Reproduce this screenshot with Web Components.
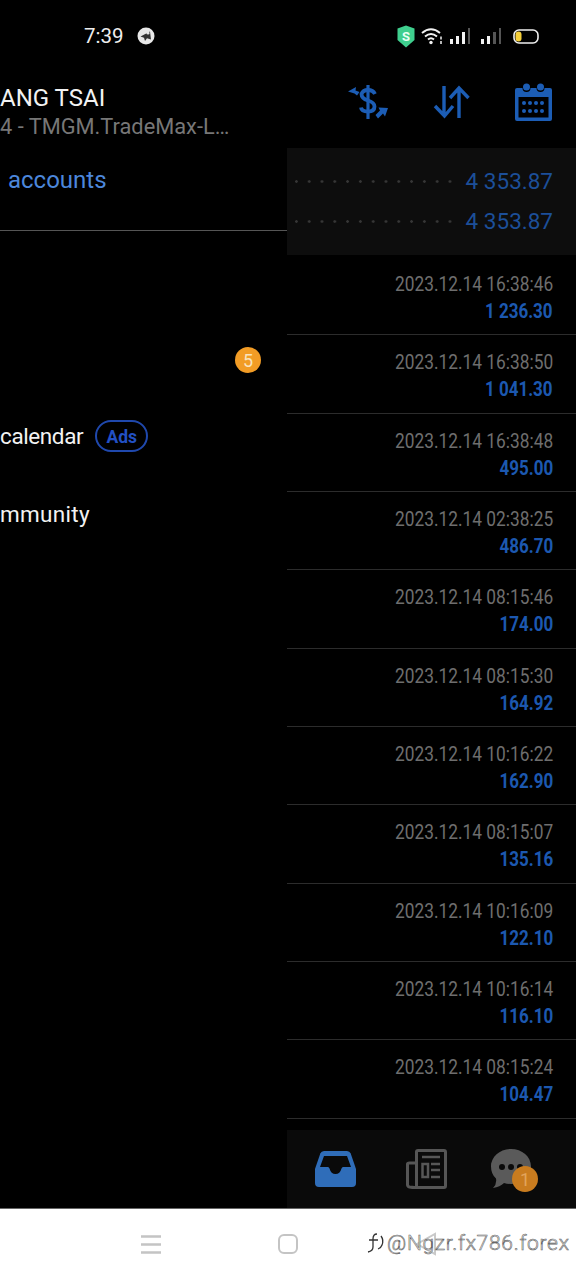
<!DOCTYPE html>
<html lang="en"><head><meta charset="utf-8"><title>Trade history</title>
<style>html,body{margin:0;background:#000;height:1280px;overflow:hidden;font-family:Roboto,sans-serif}</style>
</head><body>
<phone-screen>
  <status-bar slot="status"></status-bar>
  <side-drawer slot="drawer">
    <drawer-item slot="items"></drawer-item>
    <drawer-item slot="items"><order-badge slot="end">5</order-badge></drawer-item>
    <drawer-item slot="items"><span style="letter-spacing:-.4px">calendar</span><ads-pill>Ads</ads-pill></drawer-item>
    <drawer-item slot="items"><span style="letter-spacing:.3px">mmunity</span></drawer-item>
  </side-drawer>
  <trade-panel slot="panel">
    <balance-row value="4 353.87"></balance-row>
    <balance-row value="4 353.87"></balance-row>
    <trade-row slot="rows" d="2023.12.14 16:38:46" v="1 236.30"></trade-row>
    <trade-row slot="rows" d="2023.12.14 16:38:50" v="1 041.30"></trade-row>
    <trade-row slot="rows" d="2023.12.14 16:38:48" v="495.00"></trade-row>
    <trade-row slot="rows" d="2023.12.14 02:38:25" v="486.70"></trade-row>
    <trade-row slot="rows" d="2023.12.14 08:15:46" v="174.00"></trade-row>
    <trade-row slot="rows" d="2023.12.14 08:15:30" v="164.92"></trade-row>
    <trade-row slot="rows" d="2023.12.14 10:16:22" v="162.90"></trade-row>
    <trade-row slot="rows" d="2023.12.14 08:15:07" v="135.16"></trade-row>
    <trade-row slot="rows" d="2023.12.14 10:16:09" v="122.10"></trade-row>
    <trade-row slot="rows" d="2023.12.14 10:16:14" v="116.10"></trade-row>
    <trade-row slot="rows" d="2023.12.14 08:15:24" v="104.47"></trade-row>
  </trade-panel>
  <system-nav slot="nav"></system-nav>
</phone-screen>
<script>
function el(name, html, setup){
  customElements.define(name, class extends HTMLElement{
    constructor(){super();this.attachShadow({mode:'open'}).innerHTML=html;}
    connectedCallback(){ if(setup) setup(this); }
  });
}
el('phone-screen',`<style>
:host{display:grid;grid-template-columns:287px 289px;grid-template-rows:72px 1136px 72px;width:576px;height:1280px;background:#000;overflow:hidden}
.s{grid-column:1/3;display:block}.n{grid-column:1/3;display:block}
</style><slot class="s" name="status"></slot><slot name="drawer"></slot><slot name="panel"></slot><slot class="n" name="nav"></slot>`);

el('status-bar',`<style>
:host{display:flex;align-items:center;height:72px;box-sizing:border-box;padding:0 37px 0 84px;color:#eee;font:400 20.500px Roboto,sans-serif}
.t{width:53px}.sp{flex:1}svg{display:block;flex:none}
.r{display:flex;align-items:center;gap:6px}
</style>
<span class="t">7:39</span>
<svg width="18" height="18" viewBox="0 0 18 18"><circle cx="9" cy="9" r="8.5" fill="#e8e8e8"/><path d="M3.5 9.5 13 4.5l1 8-4-1.2-2 2.6-1-3.2z" fill="#333"/><circle cx="11" cy="6" r="1.6" fill="#e8e8e8"/></svg>
<span class="sp"></span>
<span class="r">
<svg width="18" height="23" viewBox="0 0 18 23"><path d="M9 .5 17.500 3.500V15L9 22.500.5 15V3.500z" fill="#3fcf8e"/><text x="9" y="16" text-anchor="middle" font-family="Roboto" font-weight="700" font-size="13" fill="#e9fff4">S</text></svg>
<svg width="23" height="18" viewBox="0 0 23 18" fill="none" stroke="#f2f2f2" stroke-width="2"><path d="M1 6q9-7.500 18 0M4 9.500q6-5 12 0M7 12.500q3-2.500 6 0"/><circle cx="10" cy="15.500" r="1.700" fill="#f2f2f2" stroke="none"/><path d="M20 9.500v3M20 14v3" stroke-width="1.500"/></svg>
<svg width="21" height="17" viewBox="0 0 21 17"><path d="M0 11h3v5H0zM6 8h3v8H6zM12 4h3v12h-3z" fill="#f2f2f2"/><path fill="#555" d="M18 0h2v16h-2z"/></svg>
<svg width="22" height="17" viewBox="0 0 22 17" style="margin-left:3px"><path d="M1 11h3v5H1zM7 8h3v8H7z" fill="#f2f2f2"/><path d="M13 4h3v12h-3zM19 0h2v16h-2z" fill="#555"/></svg>
<svg width="26" height="15" viewBox="0 0 26 15" style="margin-left:5px"><rect x="1" y="1" width="24" height="13" rx="5" fill="none" stroke="#f0f0f0" stroke-width="1.600"/><rect x="2.500" y="2.500" width="6" height="10" rx="3" fill="#f5cf3a"/></svg>
</span>`);

el('side-drawer',`<style>
:host{display:block;overflow:hidden;color:#f2f2f2;height:1136px}
.head{height:159px;box-sizing:border-box;border-bottom:1.500px solid #555;white-space:nowrap;padding-top:12px}
.name{font-size:24px;line-height:28px}
.srv{font-size:21.800px;line-height:26px;color:#777;margin-top:2px}
.acc{font-size:24px;line-height:28px;color:#4c87db;margin:26px 0 0 8px}
.items{display:flex;flex-direction:column;margin-top:10px}
</style>
<div class="head"><div class="name">ANG TSAI</div><div class="srv">4 - TMGM.TradeMax-L…</div><div class="acc">accounts</div></div>
<div class="items"><slot name="items"></slot></div>`);

el('drawer-item',`<style>
:host{display:flex;align-items:center;gap:13px;height:78px;font-size:22.500px;color:#f2f2f2;padding-right:26px;box-sizing:border-box}
.e{margin-left:auto;padding-top:4px}
</style><slot></slot><span class="e"><slot name="end"></slot></span>`);

el('order-badge',`<style>
:host{display:flex;align-items:center;justify-content:center;width:26px;height:26px;border-radius:50%;background:#f29c25;color:#f8e3bf;font-size:18px}
</style><slot></slot>`);

el('ads-pill',`<style>
:host{display:inline-flex;align-items:center;justify-content:center;width:53px;height:32px;box-sizing:border-box;border:2px solid #1f48ad;border-radius:16px;color:#2250c4;font-weight:700;font-size:17.500px;margin-left:-1px;padding-top:1px}
</style><slot></slot>`);

el('trade-panel',`<style>
:host{display:flex;flex-direction:column;height:1136px;overflow:hidden}
.bar{height:76px;flex:none;display:flex;align-items:center;justify-content:flex-end;gap:45px;padding:0 24px 16px 0;box-sizing:border-box;color:#1c5db5}
.bal{height:107px;flex:none;background:#0d0d0d;box-sizing:border-box;padding-top:13px}
.rows{flex:1;display:flex;flex-direction:column;padding-top:2px}
.tabs{height:78px;flex:none;background:#0a0a0a;display:flex;align-items:center;padding-left:28px;box-sizing:border-box}
svg{display:block;flex:none}
.ic{position:relative;flex:none}
.b{position:absolute;left:21px;top:17px;width:26px;height:26px;border-radius:50%;background:#c97c1f;color:#e2a45c;font-size:18px;display:flex;align-items:center;justify-content:center}
</style>
<div class="bar">
<svg width="40" height="36" viewBox="0 0 40 36" fill="none" stroke="currentColor"><path d="M27 10Q25 6 20 6t-6.500 4q0 4.500 6.500 6.500t6.500 6q0 5-6.500 5t-7-4" stroke-width="3.800"/><path d="M20 1v34" stroke-width="3.200"/><path d="M0 7.500 8 3 7.500 6.500l4 1.500-2.500 3.500-2.500-2z" fill="currentColor" stroke="none"/><path d="M40 24l-9.500-.5 1.500 3-4.500 4.500 2.500 3.500 5-5 2 3z" fill="currentColor" stroke="none"/></svg>
<svg width="37" height="34" viewBox="0 0 37 34" fill="none" stroke="currentColor" stroke-width="3.400"><path d="M11 1v30M2 21l9.500 10L20 21"/><path d="M26 33V3M17 13 26 3l9.500 10"/></svg>
<svg width="37" height="38" viewBox="0 0 37 38"><path fill="currentColor" d="M2 5h5.500a4 4 0 0 0 8 0h6a4 4 0 0 0 8 0H35a2 2 0 0 1 2 2v29a2 2 0 0 1-2 2H2a2 2 0 0 1-2-2V7a2 2 0 0 1 2-2z"/><circle cx="11.500" cy="4" r="3.500" fill="currentColor"/><circle cx="25.500" cy="4" r="3.500" fill="currentColor"/><rect x="3.500" y="14" width="30" height="20.500" fill="#000"/><g fill="currentColor"><circle cx="9" cy="20" r="2"/><circle cx="15" cy="20" r="2"/><circle cx="21" cy="20" r="2"/><circle cx="27" cy="20" r="2"/><circle cx="9" cy="28" r="2"/><circle cx="15" cy="28" r="2"/><circle cx="21" cy="28" r="2"/><circle cx="27" cy="28" r="2"/></g></svg>
</div>
<div class="bal"><slot></slot></div>
<div class="rows"><slot name="rows"></slot></div>
<div class="tabs">
<svg width="41" height="36" viewBox="0 0 41 36" style="margin-right:50px"><path fill="#2f6db9" d="M9 0h23a4 4 0 0 1 3.700 2.500L41 18v14a4 4 0 0 1-4 4H4a4 4 0 0 1-4-4V18L5.300 2.500A4 4 0 0 1 9 0z"/><path fill="#0a0a0a" d="M9 5h23l4 11h-8q-1 0-1.500 1.500Q25 23 20.500 23T14.500 17.500Q14 16 13 16H5z"/></svg>
<svg width="41" height="40" viewBox="0 0 41 40" fill="none" stroke="#565656" stroke-width="3" style="margin-right:44px"><path d="M10 38.500h28q1.500 0 1.500-1.500V3q0-1.500-1.500-1.500H12Q10.500 1.500 10.500 3v34q0 1.500-2 1.500t-5-.5q-2-.5-2-2.500V15q0-1 2-1h7"/><path stroke-width="2.500" d="M16 8h18M25 15h9M25 21h9M25 28h9"/><path stroke-width="2.500" d="M16.500 15h5.500v13h-5.500z"/></svg>
<span class="ic"><svg width="40" height="40" viewBox="0 0 40 40"><path fill="#5a5a5a" d="M20 0c11 0 20 7.500 20 17.500S31 35 20 35q-4 0-7-1-4 4-11 5 4-4 3-9.500Q0 25 0 17.500 0 7.500 20 0z"/><path fill="#5a5a5a" d="M20 0C9 0 0 7.500 0 17.500h20z"/><g fill="#0a0a0a"><circle cx="11" cy="18" r="3"/><circle cx="20" cy="18" r="3"/><circle cx="29" cy="18" r="3"/></g></svg><span class="b">1</span></span>
</div>`);

el('balance-row',`<style>
:host{display:flex;align-items:center;height:40px;padding:0 23px 0 8px;color:#1c4f99;font-size:22.500px}
.d{flex:1;height:3px;margin-right:14px;background-image:radial-gradient(circle,#363636 1.200px,transparent 1.500px);background-size:12.800px 3px;background-position:-5px 0;background-repeat:repeat-x}
</style><span class="d"></span><span id="v"></span>`,h=>{h.shadowRoot.getElementById('v').textContent=h.getAttribute('value')});

el('trade-row',`<style>
:host{display:flex;flex-direction:column;align-items:flex-end;height:78.350px;box-sizing:border-box;border-bottom:1.500px solid #2c2c2c;padding:14px 23px 0 0;flex:none}
span{display:block;transform-origin:right center;white-space:nowrap}
#d{font-size:20.500px;line-height:26px;color:#6e6e6e;transform:scaleX(.845)}
#v{font-size:20px;line-height:26px;font-weight:700;color:#1c58b0;margin-top:1px;transform:scaleX(.85)}
</style><span id="d"></span><span id="v"></span>`,h=>{const s=h.shadowRoot;s.getElementById('d').textContent=h.getAttribute('d');s.getElementById('v').textContent=h.getAttribute('v')});

el('system-nav',`<style>
:host{display:block;position:relative;height:72px;background:#fff;border-top:1.500px solid #666;box-sizing:border-box}
.row{display:flex;align-items:center;height:70px;padding-left:141px;box-sizing:border-box}
svg{display:block;flex:none}
.w{position:absolute;left:367px;top:22px;display:flex;align-items:center;gap:2px;font:300 21px Roboto,sans-serif;color:#fff;-webkit-text-stroke:.6px #666;letter-spacing:.7px;white-space:nowrap}
</style>
<div class="row">
<svg width="20" height="19" viewBox="0 0 20 19" fill="none" stroke="#c4c4c4" stroke-width="2.400" style="margin-right:117px"><path d="M0 1.500h20M0 9.500h20M0 17.500h20"/></svg>
<svg width="20" height="20" viewBox="0 0 20 20" fill="none" stroke="#c4c4c4" stroke-width="2" style="margin-right:117px"><rect x="1" y="1" width="18" height="18" rx="5"/></svg>
<svg width="22" height="24" viewBox="0 0 22 24" fill="none" stroke="#c9c9c9" stroke-width="2"><path d="M20 2v20L2 12z"/></svg>
</div>
<div class="w"><svg width="18" height="22" viewBox="0 0 18 22" fill="none" stroke="#333" stroke-width="1.300"><path d="M10 2Q6 2 6 7v8q0 4-5 5M2 8h9M14 4q3 4 1 9-1 3-4 4"/></svg><span>@Ngzr.fx786.forex</span></div>`);
</script>
</body></html>
